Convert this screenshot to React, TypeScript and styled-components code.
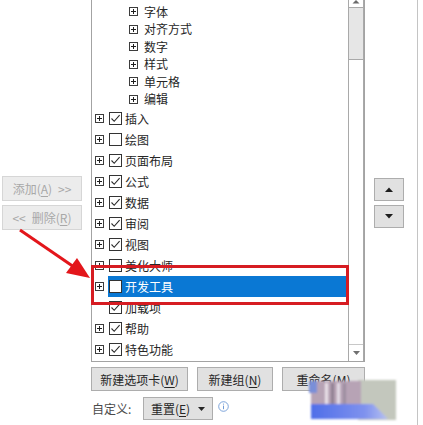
import React from 'react';
import styled, { createGlobalStyle } from 'styled-components';

const GlobalStyle = createGlobalStyle`
  html, body { margin: 0; padding: 0; background: #ffffff; }
  body {
    font-family: "Noto Sans CJK SC", "Microsoft YaHei", sans-serif;
    font-size: 12px;
    color: #262626;
  }
  #root { width: 423px; height: 425px; overflow: hidden; position: relative; }
`;

const Page = styled.div`
  position: relative;
  display: flex;
  width: 423px;
  height: 425px;
`;

const LeftColumn = styled.div`
  width: 91px;
  flex: none;
  display: flex;
  flex-direction: column;
  gap: 4px;
  padding: 176px 0 0 2px;
  box-sizing: border-box;
`;

const DisabledButton = styled.div`
  width: 80px;
  height: 25px;
  box-sizing: border-box;
  border: 1px solid #d6d6d6;
  background: #ececec;
  color: #a8a8a8;
  display: flex;
  align-items: center;
  justify-content: center;
  gap: 6px;
  font-size: 12px;
  white-space: nowrap;
`;

const Center = styled.div`
  width: 274px;
  flex: none;
  display: flex;
  flex-direction: column;
`;

const TreePanel = styled.div`
  height: 362px;
  box-sizing: border-box;
  border: 1px solid #a3a3a3;
  border-top: none;
  display: flex;
  overflow: hidden;
`;

const TreeList = styled.div`
  flex: 1;
  display: flex;
  flex-direction: column;
  padding-top: 3px;
`;

const Row = styled.div<{ $sub?: boolean }>`
  height: ${(p) => (p.$sub ? '17.5px' : '21px')};
  flex: none;
  display: flex;
  align-items: center;
  padding-left: ${(p) => (p.$sub ? '37px' : '3px')};
`;

const Expander = styled.span<{ $hidden?: boolean }>`
  width: 9px;
  height: 9px;
  flex: none;
  display: inline-flex;
  visibility: ${(p) => (p.$hidden ? 'hidden' : 'visible')};
`;

const RowBody = styled.div<{ $selected?: boolean; $sub?: boolean }>`
  flex: 1;
  align-self: stretch;
  display: flex;
  align-items: center;
  gap: 3px;
  margin-left: ${(p) => (p.$sub ? '5px' : '4px')};
  padding-left: 1px;
  background: ${(p) => (p.$selected ? '#0a78d4' : 'transparent')};
  color: ${(p) => (p.$selected ? '#ffffff' : '#262626')};
  white-space: nowrap;
`;

const CheckBox = styled.span`
  width: 13px;
  height: 13px;
  box-sizing: border-box;
  border: 1px solid #333333;
  background: #ffffff;
  flex: none;
  display: inline-flex;
`;

const Label = styled.span`
  line-height: 16px;
`;

const Scrollbar = styled.div`
  width: 16px;
  flex: none;
  box-sizing: border-box;
  border-left: 1px solid #a9a9a9;
  border-right: 1px solid #a9a9a9;
  display: flex;
  flex-direction: column;
`;

const ScrollTop = styled.div`
  height: 7px;
  flex: none;
  border-bottom: 1px solid #a9a9a9;
  display: flex;
  justify-content: center;
  align-items: flex-start;
`;

const Thumb = styled.div`
  height: 51px;
  flex: none;
  background: #e6e6e6;
  border-bottom: 1px solid #a9a9a9;
`;

const Track = styled.div`
  flex: 1;
`;

const ScrollBottom = styled.div`
  height: 16px;
  flex: none;
  border-top: 1px solid #c8c8c8;
  display: flex;
  align-items: center;
  justify-content: center;
`;

const ButtonRow = styled.div`
  display: flex;
  gap: 9px;
  margin-top: 5px;
`;

const Button = styled.div<{ $w: number }>`
  width: ${(p) => p.$w}px;
  height: 24px;
  box-sizing: border-box;
  border: 1px solid #adadad;
  background: #e1e1e1;
  color: #262626;
  display: flex;
  align-items: center;
  justify-content: center;
  gap: 8px;
  white-space: nowrap;
`;

const CustomizeRow = styled.div`
  display: flex;
  align-items: center;
  margin-top: 6px;
  height: 23px;
`;

const CustomizeLabel = styled.span`
  color: #4a4a4a;
  margin-left: 1px;
  width: 51px;
`;

const SmallButton = styled(Button)`
  height: 23px;
`;

const InfoIcon = styled.span`
  margin-left: 5px;
  margin-top: -4px;
  display: inline-flex;
`;

const U = styled.span`
  text-decoration: underline;
  text-underline-offset: 2px;
`;

const RightColumn = styled.div`
  width: 52px;
  flex: none;
  display: flex;
  flex-direction: column;
  gap: 4px;
  padding: 178px 0 0 9px;
  box-sizing: border-box;
`;

const ArrowButton = styled.div`
  width: 30px;
  height: 23px;
  box-sizing: border-box;
  border: 1px solid #adadad;
  background: #e1e1e1;
  display: flex;
  align-items: center;
  justify-content: center;
`;

const Divider = styled.div`
  flex: 1;
  border-left: 1px solid #c4c4c4;
`;

const RedBox = styled.div`
  position: absolute;
  left: 91px;
  top: 265px;
  width: 258px;
  height: 40px;
  box-sizing: border-box;
  border: 3px solid #d61c22;
  pointer-events: none;
`;

const Overlay = styled.svg`
  position: absolute;
  pointer-events: none;
`;

const PlusIcon = () => (
  <svg width="9" height="9" viewBox="0 0 9 9">
    <rect x="0.5" y="0.5" width="8" height="8" fill="#fff" stroke="#3c3c3c" />
    <path d="M2 4.5h5M4.5 2v5" stroke="#1e1e1e" strokeWidth="1" />
  </svg>
);

const Check = () => (
  <svg width="11" height="11" viewBox="0 0 11 11">
    <path d="M1.5 5.5 L4.2 8.3 L9.6 2.2" fill="none" stroke="#2a2a2a" strokeWidth="1.1" />
  </svg>
);

type Item = { label: string; sub?: boolean; expander?: boolean; checked?: boolean; selected?: boolean };

const items: Item[] = [
  { label: '字体', sub: true, expander: true },
  { label: '对齐方式', sub: true, expander: true },
  { label: '数字', sub: true, expander: true },
  { label: '样式', sub: true, expander: true },
  { label: '单元格', sub: true, expander: true },
  { label: '编辑', sub: true, expander: true },
  { label: '插入', expander: true, checked: true },
  { label: '绘图', expander: true, checked: false },
  { label: '页面布局', expander: true, checked: true },
  { label: '公式', expander: true, checked: true },
  { label: '数据', expander: true, checked: true },
  { label: '审阅', expander: true, checked: true },
  { label: '视图', expander: true, checked: true },
  { label: '美化大师', expander: true, checked: false },
  { label: '开发工具', expander: true, checked: false, selected: true },
  { label: '加载项', expander: false, checked: true },
  { label: '帮助', expander: true, checked: true },
  { label: '特色功能', expander: true, checked: true },
];

export default function App() {
  return (
    <>
      <GlobalStyle />
      <Page>
        <LeftColumn>
          <DisabledButton>
            <span>
              添加(<U>A</U>)
            </span>
            <span>&gt;&gt;</span>
          </DisabledButton>
          <DisabledButton>
            <span>&lt;&lt;</span>
            <span>
              删除(<U>R</U>)
            </span>
          </DisabledButton>
        </LeftColumn>

        <Center>
          <TreePanel>
            <TreeList>
              {items.map((it) => (
                <Row key={it.label} $sub={it.sub}>
                  <Expander $hidden={!it.expander}>
                    <PlusIcon />
                  </Expander>
                  <RowBody $selected={it.selected} $sub={it.sub}>
                    {!it.sub && <CheckBox>{it.checked && <Check />}</CheckBox>}
                    <Label>{it.label}</Label>
                  </RowBody>
                </Row>
              ))}
            </TreeList>
            <Scrollbar>
              <ScrollTop>
                <svg width="8" height="4" viewBox="0 0 8 4">
                  <path d="M0.5 3.5 L4 0 L7.5 3.5 Z" fill="#6a6a6a" />
                </svg>
              </ScrollTop>
              <Thumb />
              <Track />
              <ScrollBottom>
                <svg width="7" height="4" viewBox="0 0 7 4">
                  <path d="M0 0 L7 0 L3.5 4 Z" fill="#707070" />
                </svg>
              </ScrollBottom>
            </Scrollbar>
          </TreePanel>

          <ButtonRow>
            <Button $w={97}>
              <span>
                新建选项卡(<U>W</U>)
              </span>
            </Button>
            <Button $w={76}>
              <span>
                新建组(<U>N</U>)
              </span>
            </Button>
            <Button $w={83}>
              <span>
                重命名(<U>M</U>)
              </span>
            </Button>
          </ButtonRow>

          <CustomizeRow>
            <CustomizeLabel>自定义:</CustomizeLabel>
            <SmallButton $w={70}>
              <span>
                重置(<U>E</U>)
              </span>
              <svg width="7" height="4" viewBox="0 0 7 4">
                <path d="M0 0 L7 0 L3.5 4 Z" fill="#262626" />
              </svg>
            </SmallButton>
            <InfoIcon>
              <svg width="11" height="11" viewBox="0 0 11 11">
                <circle cx="5.5" cy="5.5" r="4.8" fill="none" stroke="#6f9bd6" strokeWidth="0.9" />
                <path d="M5.5 4.6v3.6" stroke="#6f9bd6" strokeWidth="1" />
                <circle cx="5.5" cy="3.1" r="0.6" fill="#6f9bd6" />
              </svg>
            </InfoIcon>
          </CustomizeRow>
        </Center>

        <RightColumn>
          <ArrowButton>
            <svg width="8" height="5" viewBox="0 0 8 5">
              <path d="M0 5 L4 0.5 L8 5 Z" fill="#1e1e1e" />
            </svg>
          </ArrowButton>
          <ArrowButton>
            <svg width="8" height="5" viewBox="0 0 8 5">
              <path d="M0 0 L8 0 L4 4.5 Z" fill="#1e1e1e" />
            </svg>
          </ArrowButton>
        </RightColumn>

        <Divider />

        <RedBox />

        <Overlay width="100" height="70" viewBox="0 0 100 70" style={{ left: 0, top: 220 }}>
          <line x1="20" y1="10" x2="74" y2="47" stroke="#e3161b" strokeWidth="3" />
          <path d="M90 58 L66 53 L77 38 Z" fill="#e3161b" />
        </Overlay>

        <Overlay width="100" height="50" viewBox="0 0 100 50" style={{ left: 303, top: 375 }}>
          <defs>
            <filter id="blur" x="-20%" y="-20%" width="140%" height="140%">
              <feGaussianBlur stdDeviation="1" />
            </filter>
            <linearGradient id="blue" x1="0" y1="0" x2="1" y2="0">
              <stop offset="0" stopColor="#4f6ee8" />
              <stop offset="0.7" stopColor="#7f92ee" />
              <stop offset="1" stopColor="#b8c2f2" />
            </linearGradient>
          </defs>
          <g filter="url(#blur)">
            <rect x="55" y="5" width="38" height="40" fill="#c3c7bd" />
            <rect x="8" y="6" width="50" height="23" fill="#b7a3b5" />
            <rect x="22" y="8" width="3" height="21" fill="#e8e0e8" />
            <rect x="28" y="8" width="3" height="21" fill="#8e7f90" />
            <rect x="34" y="8" width="3" height="21" fill="#e4dce6" />
            <rect x="40" y="8" width="3" height="21" fill="#9c8ea0" />
            <rect x="6" y="6" width="8" height="12" fill="#7a8fd8" />
            <path d="M8 29 L70 29 L85 44 L8 44 Z" fill="url(#blue)" />
          </g>
        </Overlay>
      </Page>
    </>
  );
}
